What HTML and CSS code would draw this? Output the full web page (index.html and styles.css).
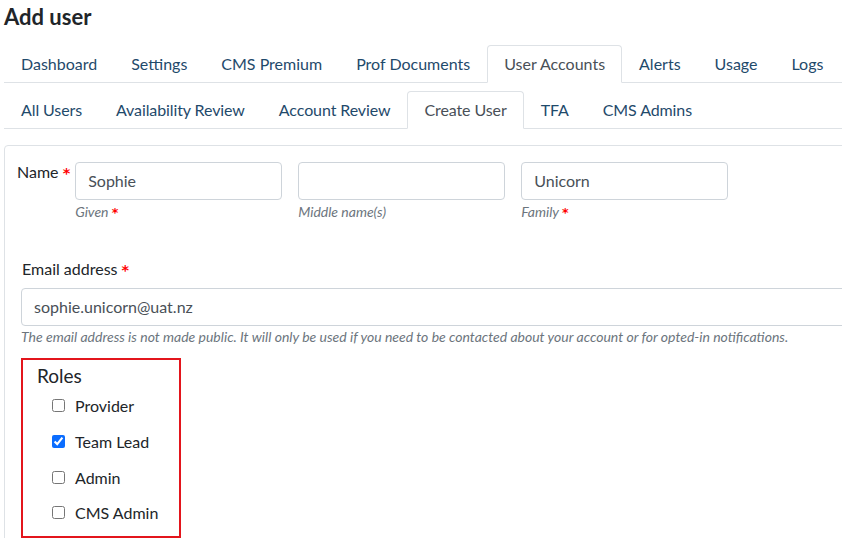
FILE: index.html
```html
<!DOCTYPE html>
<html>
<head>
<meta charset="utf-8">
<link rel="stylesheet" href="styles.css">
</head>
<body>
<div class="page">
  <h1 class="title">Add user</h1>
  <ul class="tabs tabs-main">
    <li class="tab">Dashboard</li>
    <li class="tab">Settings</li>
    <li class="tab">CMS Premium</li>
    <li class="tab">Prof Documents</li>
    <li class="tab active">User Accounts</li>
    <li class="tab">Alerts</li>
    <li class="tab">Usage</li>
    <li class="tab">Logs</li>
  </ul>
  <ul class="tabs tabs-sub">
    <li class="tab">All Users</li>
    <li class="tab">Availability Review</li>
    <li class="tab">Account Review</li>
    <li class="tab active">Create User</li>
    <li class="tab">TFA</li>
    <li class="tab">CMS Admins</li>
  </ul>
  <div class="card">
    <div class="name-row">
      <div class="name-label">Name <span class="req">*</span></div>
      <div class="name-field">
        <div class="input">Sophie</div>
        <div class="help">Given <span class="req">*</span></div>
      </div>
      <div class="name-field">
        <div class="input"></div>
        <div class="help">Middle name(s)</div>
      </div>
      <div class="name-field">
        <div class="input">Unicorn</div>
        <div class="help">Family <span class="req">*</span></div>
      </div>
    </div>
    <div class="email-group">
      <div class="email-label">Email address <span class="req">*</span></div>
      <div class="input email-input">sophie.unicorn@uat.nz</div>
      <div class="help email-help">The email address is not made public. It will only be used if you need to be contacted about your account or for opted-in notifications.</div>
    </div>
    <div class="roles">
      <div class="roles-title">Roles</div>
      <label class="role"><input type="checkbox"><span>Provider</span></label>
      <label class="role"><input type="checkbox" checked><span>Team Lead</span></label>
      <label class="role"><input type="checkbox"><span>Admin</span></label>
      <label class="role"><input type="checkbox"><span>CMS Admin</span></label>
    </div>
  </div>
</div>
</body>
</html>
```
FILE: styles.css
```css
html, body {
  margin: 0;
  padding: 0;
  overflow: hidden;
  background: #fff;
}
body {
  font-family: "Lato", "Liberation Sans", sans-serif;
  font-size: 16px;
  color: #212529;
}
.page {
  padding-left: 4px;
  width: 838px;
  height: 538px;
  overflow: hidden;
}
.title {
  margin: 0;
  padding-top: 4px;
  font-size: 22px;
  line-height: 25px;
  font-weight: 700;
  height: 41px;
}
.tabs {
  list-style: none;
  margin: 0;
  padding: 0;
  display: flex;
  border-bottom: 1px solid #dee2e6;
}
.tabs-sub {
  margin-top: 8px;
}
.tabs-sub .tab {
  letter-spacing: -0.1px;
}
.tab {
  padding: 6px 16px;
  line-height: 24px;
  border: 1px solid transparent;
  border-radius: 4px 4px 0 0;
  margin-bottom: -1px;
  color: #1f4a6b;
  white-space: nowrap;
}
.tab.active {
  color: #495057;
  background: #fff;
  border-color: #dee2e6 #dee2e6 #fff;
}
.card {
  margin-top: 16px;
  width: 900px;
  border: 1px solid #dee2e6;
  border-radius: 4px;
  padding: 16px 0 0 16px;
  height: 500px;
}
.name-row {
  display: flex;
  align-items: flex-start;
  margin-left: -4px;
}
.name-label {
  margin-top: -2px;
  line-height: 24px;
  margin-right: 5px;
}
.req {
  color: #f00;
  font-family: "DejaVu Sans", sans-serif;
  font-weight: 700;
  font-style: normal;
  font-size: 0.9em;
}
.name-field {
  width: 207px;
  margin-right: 16px;
}
.input {
  height: 38px;
  box-sizing: border-box;
  border: 1px solid #ced4da;
  border-radius: 4px;
  padding: 6px 12px;
  line-height: 24px;
  color: #495057;
  background: #fff;
}
.help {
  font-size: 14px;
  font-style: italic;
  color: #6c757d;
  line-height: 20px;
  margin-top: 2px;
}
.email-group {
  margin-top: 34px;
}
.email-label {
  line-height: 24px;
  margin-left: 1px;
  margin-bottom: 6px;
}
.email-input {
  width: 900px;
}
.email-help {
  font-size: 14px;
  margin-top: 1px;
}
.roles {
  margin-top: 11px;
  width: 156px;
  height: 172px;
  border: 2px solid #e3151c;
  padding: 4px 0 0 0;
}
.roles-title {
  font-size: 19px;
  line-height: 24px;
  margin-left: 14px;
}
.role {
  display: flex;
  align-items: center;
  height: 35.7px;
  margin-left: 26px;
}
.role input {
  width: 13px;
  height: 13px;
  margin: 0 10px 0 3px;
  accent-color: #0b6dff;
}
```
